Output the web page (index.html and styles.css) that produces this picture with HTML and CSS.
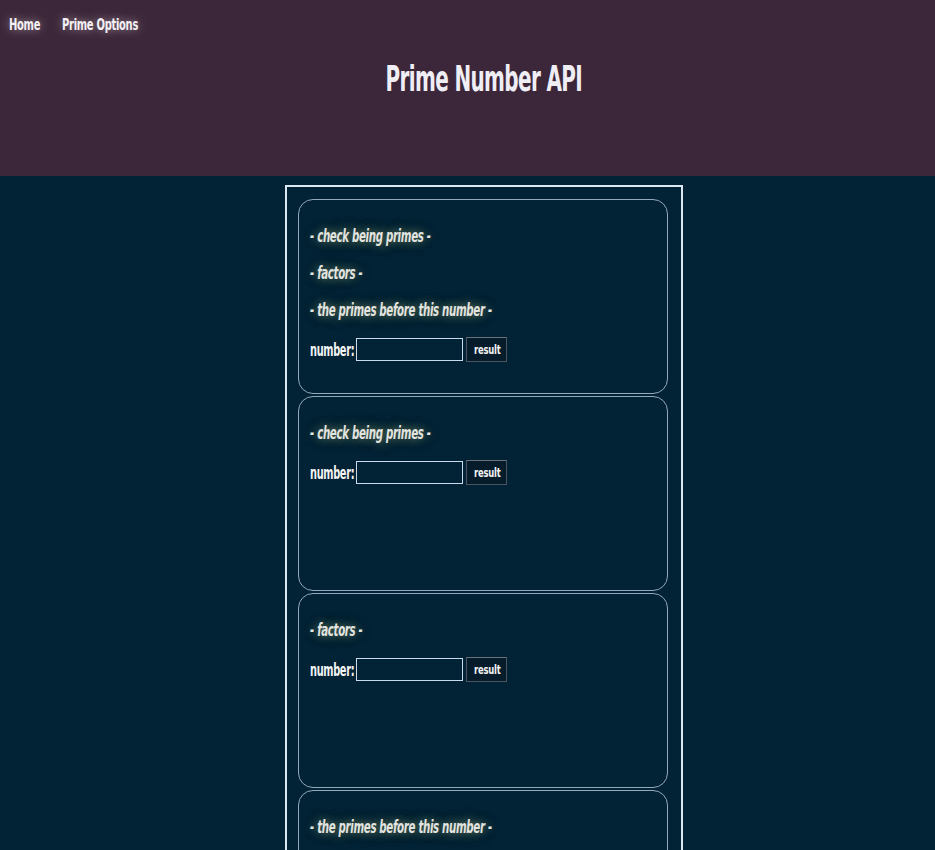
FILE: index.html
```html
<!DOCTYPE html>
<html>
<head>
<meta charset="utf-8">
<title>Prime Number API</title>
<link rel="stylesheet" href="styles.css">
</head>
<body>
<header class="header">
  <nav class="nav">
    <a class="nav-link nav-home" href="#"><span class="sq">Home</span></a>
    <a class="nav-link nav-options" href="#"><span class="sq">Prime Options</span></a>
  </nav>
  <h1 class="title"><span class="title-text">Prime Number API</span></h1>
</header>
<main class="main">
  <div class="panel">
    <section class="card">
      <p class="option"><span class="sq">- check being primes -</span></p>
      <p class="option"><span class="sq">- factors -</span></p>
      <p class="option"><span class="sq">- the primes before this number -</span></p>
      <div class="form-row">
        <label class="label"><span class="sq">number:</span></label>
        <input class="num-input" type="text">
        <button class="btn"><span class="sq">result</span></button>
      </div>
    </section>
    <section class="card">
      <p class="option"><span class="sq">- check being primes -</span></p>
      <div class="form-row">
        <label class="label"><span class="sq">number:</span></label>
        <input class="num-input" type="text">
        <button class="btn"><span class="sq">result</span></button>
      </div>
    </section>
    <section class="card">
      <p class="option"><span class="sq">- factors -</span></p>
      <div class="form-row">
        <label class="label"><span class="sq">number:</span></label>
        <input class="num-input" type="text">
        <button class="btn"><span class="sq">result</span></button>
      </div>
    </section>
    <section class="card">
      <p class="option"><span class="sq">- the primes before this number -</span></p>
      <div class="form-row">
        <label class="label"><span class="sq">number:</span></label>
        <input class="num-input" type="text">
        <button class="btn"><span class="sq">result</span></button>
      </div>
    </section>
  </div>
</main>
</body>
</html>
```
FILE: styles.css
```css
* { box-sizing: border-box; }
html, body { margin: 0; padding: 0; }
body {
  background: #022236;
  font-family: "DejaVu Sans", sans-serif;
  font-stretch: condensed;
  font-weight: bold;
  color: #f2f2f2;
  overflow: hidden;
}
.sq {
  display: inline-block;
  white-space: nowrap;
  transform-origin: left center;
}
.header {
  background: #3c2639;
  height: 176px;
  padding-top: 12px;
}
.nav {
  display: flex;
  gap: 22px;
  padding-left: 9px;
  height: 24px;
  align-items: center;
}
.nav-link {
  display: block;
  color: #f4f0f4;
  text-decoration: none;
  font-size: 16px;
  letter-spacing: -0.4px;
  text-shadow: 0 0 12px rgba(255,255,255,0.5);
}
.nav-link .sq { transform: scaleX(0.69); }
.nav-home { width: 31px; }
.nav-options { width: 77px; }
.title {
  margin: 0;
  margin-top: 22px;
  padding-left: 32px;
  text-align: center;
  font-size: 35px;
  line-height: 42px;
  letter-spacing: -1px;
  color: #f0eef5;
  font-weight: bold;
}
.title-text {
  display: inline-block;
  transform: scaleX(0.635);
}
.main {
  padding-top: 9px;
}
.panel {
  margin-left: 285px;
  width: 398px;
  border: 2px solid #dbe8f2;
  border-bottom: none;
  padding: 12px 13px 0 11px;
  display: flex;
  flex-direction: column;
  gap: 2px;
  min-height: 700px;
}
.card {
  height: 195px;
  border: 1px solid #93a9b9;
  border-radius: 15px;
  padding: 10px 11px;
  flex-shrink: 0;
}
.option {
  margin: 16px 0;
  line-height: 21px;
  font-size: 17px;
  font-style: italic;
  letter-spacing: -0.5px;
  color: #e2e4e0;
  text-shadow: 0 0 12px rgba(210,210,130,0.5), 0 0 24px rgba(190,190,120,0.3);
}
.option .sq { transform: scaleX(0.67); }
.form-row {
  display: flex;
  align-items: center;
  height: 25px;
}
.label {
  display: block;
  width: 44px;
  font-size: 17px;
  letter-spacing: -0.5px;
  color: #f4f4f4;
  margin-right: 2px;
}
.label .sq { transform: scaleX(0.64); }
.num-input {
  width: 107px;
  height: 23px;
  background: transparent;
  border: 1px solid #c9dbea;
  margin: 0 3px 0 0;
  padding: 0;
  color: #fff;
}
.btn {
  width: 41px;
  height: 25px;
  background: #061c2a;
  border: 1px solid #4b5560;
  border-top-color: #6a737c;
  color: #f4f4f4;
  font-family: "DejaVu Sans", sans-serif;
  font-stretch: condensed;
  font-weight: bold;
  font-size: 13px;
  letter-spacing: -0.3px;
  padding: 0 0 0 7px;
  text-align: left;
}
.btn .sq { transform: scaleX(0.72); }
```
